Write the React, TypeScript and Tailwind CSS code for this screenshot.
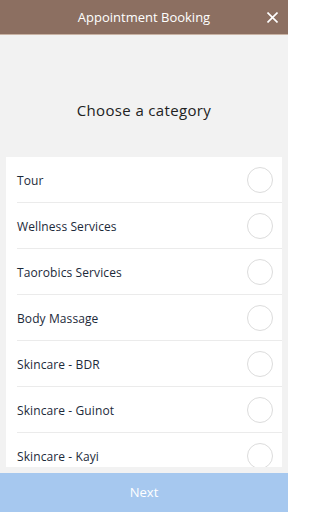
import React from "react";

const items = [
  "Tour",
  "Wellness Services",
  "Taorobics Services",
  "Body Massage",
  "Skincare - BDR",
  "Skincare - Guinot",
  "Skincare - Kayi",
];

export default function App() {
  return (
    <div
      className="w-[288px] h-[512px] flex flex-col bg-[#f2f2f2] overflow-hidden"
      style={{ fontFamily: '"Open Sans", "Noto Sans", sans-serif' }}
    >
      <div className="h-[35px] shrink-0 bg-[#8c6f61] border-b border-[#c9b3a4] flex items-center justify-center relative">
        <span className="text-white text-[13px] leading-none">Appointment Booking</span>
        <svg
          className="absolute right-[10px] top-[12px]"
          width="11"
          height="11"
          viewBox="0 0 11 11"
          fill="none"
          stroke="white"
          strokeWidth="1.6"
        >
          <path d="M0.5 0.5 L10.5 10.5 M10.5 0.5 L0.5 10.5" />
        </svg>
      </div>
      <div className="pt-[65px] pb-[37px] shrink-0 flex justify-center">
        <span className="text-[15px] leading-[20px] tracking-[0.35px] text-[#222]">Choose a category</span>
      </div>
      <div className="mx-[6px] flex-1 bg-white overflow-hidden">
        {items.map((t) => (
          <div key={t} className="h-[46px] flex items-center ml-[11px] pr-[9px] border-b border-[#ebebeb]">
            <span className="flex-1 text-[12px] leading-[16px] pt-[2px] text-[#1c2a3a] tracking-[0.1px]">{t}</span>
            <span className="w-[26px] h-[26px] rounded-full border border-[#dcdcdc]" />
          </div>
        ))}
      </div>
      <div className="h-[6px] shrink-0" />
      <div className="h-[39px] shrink-0 bg-[#a6c8ef] flex items-center justify-center">
        <span className="text-white text-[13px] pt-[1px]">Next</span>
      </div>
    </div>
  );
}
